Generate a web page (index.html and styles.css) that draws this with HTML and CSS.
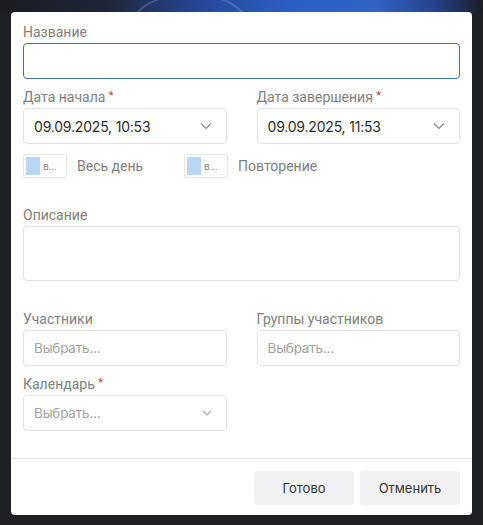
FILE: index.html
```html
<!DOCTYPE html>
<html lang="ru">
<head>
    <meta charset="UTF-8">
    <meta name="viewport" content="width=device-width, initial-scale=1.0">
    <title>Новое событие</title>
    <link rel="stylesheet" href="styles.css">
</head>
<body>
    <div class="backdrop-top"></div>
    <div class="dialog">
        <div class="dialog-body">
            <div class="field">
                <label class="field-label">Название</label>
                <div class="control control-focus"></div>
            </div>

            <div class="row row-dates">
                <div class="field">
                    <label class="field-label">Дата начала <span class="req">*</span></label>
                    <div class="control control-select">
                        <span class="value">09.09.2025, 10:53</span>
                        <svg class="chevron" width="12" height="8" viewBox="0 0 12 8"><path d="M1 1.5l5 5 5-5" fill="none" stroke="#8a8a8a" stroke-width="1.2"/></svg>
                    </div>
                </div>
                <div class="field">
                    <label class="field-label">Дата завершения <span class="req">*</span></label>
                    <div class="control control-select">
                        <span class="value">09.09.2025, 11:53</span>
                        <svg class="chevron" width="12" height="8" viewBox="0 0 12 8"><path d="M1 1.5l5 5 5-5" fill="none" stroke="#8a8a8a" stroke-width="1.2"/></svg>
                    </div>
                </div>
            </div>

            <div class="toggles">
                <div class="toggle">
                    <div class="toggle-box"><span class="toggle-knob"></span><span class="toggle-text">в...</span></div>
                    <span class="toggle-label">Весь день</span>
                </div>
                <div class="toggle">
                    <div class="toggle-box"><span class="toggle-knob"></span><span class="toggle-text">в...</span></div>
                    <span class="toggle-label">Повторение</span>
                </div>
            </div>

            <div class="field field-desc">
                <label class="field-label">Описание</label>
                <div class="control control-area"></div>
            </div>

            <div class="row row-people">
                <div class="field">
                    <label class="field-label">Участники</label>
                    <div class="control"><span class="placeholder">Выбрать...</span></div>
                </div>
                <div class="field">
                    <label class="field-label">Группы участников</label>
                    <div class="control"><span class="placeholder">Выбрать...</span></div>
                </div>
            </div>

            <div class="row row-calendar">
                <div class="field">
                    <label class="field-label">Календарь <span class="req">*</span></label>
                    <div class="control control-select">
                        <span class="placeholder">Выбрать...</span>
                        <svg class="chevron" width="10" height="6" viewBox="0 0 10 6"><path d="M1 1l4 4 4-4" fill="none" stroke="#a8a8a8" stroke-width="1.1"/></svg>
                    </div>
                </div>
            </div>
        </div>

        <div class="dialog-footer">
            <button class="btn">Готово</button>
            <button class="btn">Отменить</button>
        </div>
    </div>
</body>
</html>
```

FILE: styles.css
```css
body {
    margin: 0;
    background: #1f2023;
    font-family: Roboto, "Noto Sans", sans-serif;
    height: 525px;
    overflow: hidden;
    position: relative;
}
.backdrop-top {
    position: absolute;
    top: 0;
    left: 0;
    right: 0;
    height: 14px;
    background:
        radial-gradient(ellipse 60px 30px at 190px 22px, transparent 88%, rgba(140, 175, 240, 0.35) 92%, transparent 96%),
        linear-gradient(to right, #1b1c20 0%, #1e2537 22%, #27489a 42%, #2c5ec6 60%, #3162c4 78%, #25438a 90%, #1c1e26 100%);
}
.dialog {
    position: relative;
    margin: 12px 11px 0;
    width: 461px;
    height: 503px;
    background: #fff;
    border-radius: 4px;
    display: flex;
    flex-direction: column;
}
.dialog-body {
    flex: 1;
    padding: 12px 12px 0;
}
.field {
    display: flex;
    flex-direction: column;
}
.field-label {
    font-size: 14px;
    line-height: 17px;
    color: #808080;
    margin-bottom: 2px;
}
.req {
    color: #c0392b;
    font-size: 11px;
    vertical-align: top;
    line-height: 14px;
}
.control {
    box-sizing: border-box;
    height: 36px;
    border: 1px solid #e2e2e2;
    border-radius: 4px;
    display: flex;
    align-items: center;
    padding: 0 10px;
}
.control-focus {
    border-color: #4b6ea8;
}
.control-select {
    justify-content: space-between;
    padding-right: 14px;
}
.control-area {
    height: 55px;
}
.value {
    font-family: Inter, sans-serif;
    font-size: 14px;
    color: #2e2e2e;
    letter-spacing: -0.2px;
}
.placeholder {
    font-family: Inter, sans-serif;
    font-size: 13.5px;
    color: #a3a3a3;
    letter-spacing: -0.2px;
}
.row {
    display: grid;
    grid-template-columns: 1fr 1fr;
    column-gap: 30px;
}
.row-dates {
    margin-top: 10px;
}
.toggles {
    display: flex;
    margin-top: 10px;
    height: 24px;
}
.toggle {
    display: flex;
    align-items: center;
    gap: 10px;
    width: 161px;
}
.toggle-box {
    box-sizing: border-box;
    width: 44px;
    height: 24px;
    border: 1px solid #e6e6e6;
    border-radius: 2px;
    display: flex;
    align-items: center;
    padding-left: 2px;
    gap: 3px;
}
.toggle-knob {
    width: 14px;
    height: 18px;
    background: #b9d8f6;
}
.toggle-text {
    font-size: 10px;
    color: #8c8c8c;
}
.toggle-label {
    font-size: 14px;
    color: #808080;
}
.field-desc {
    margin-top: 29px;
}
.row-people {
    margin-top: 30px;
}
.row-calendar {
    margin-top: 10px;
}
.dialog-footer {
    border-top: 1px solid #e6e6e6;
    display: flex;
    justify-content: flex-end;
    gap: 6px;
    padding: 12px 12px 10px;
}
.btn {
    width: 100px;
    height: 34px;
    border: none;
    border-radius: 3px;
    background: #f2f2f5;
    font-family: Inter, sans-serif;
    font-size: 13px;
    color: #333;
    cursor: pointer;
}
```
